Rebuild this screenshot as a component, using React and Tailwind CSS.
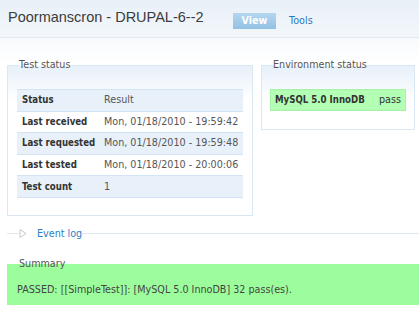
import React from 'react';

const rows = [
  { label: 'Status', value: 'Result', shade: true },
  { label: 'Last received', value: 'Mon, 01/18/2010 - 19:59:42', shade: false },
  { label: 'Last requested', value: 'Mon, 01/18/2010 - 19:59:48', shade: true },
  { label: 'Last tested', value: 'Mon, 01/18/2010 - 20:00:06', shade: false },
  { label: 'Test count', value: '1', shade: true },
];

const App = () => {
  return (
    <div className="w-[419px] h-[316px] overflow-hidden bg-white text-[#4a4a4a] text-[9.6px] leading-[12px] font-['DejaVu_Sans',sans-serif]">
      <div className="h-[38px] border-b border-[#e1e9f1] bg-gradient-to-b from-[#e8f0f8] to-[#f3f7fb] flex items-start">
        <h1 className="ml-[8px] mt-[9px] w-[225px] text-[14.5px] leading-[17px] text-[#3c3c3c] font-['Liberation_Sans',sans-serif]">
          Poormanscron - DRUPAL-6--2
        </h1>
        <div className="mt-[13px] flex items-center">
          <span className="w-[43px] h-[16px] flex items-center justify-center bg-gradient-to-b from-[#b6d6ef] to-[#92c1e4] text-white font-bold">
            View
          </span>
          <span className="ml-[13px] text-[#2a78bf]">Tools</span>
        </div>
      </div>

      <div className="bg-gradient-to-b from-[#f7fafd] to-white to-[25px] pt-[21px] px-[7px] w-[440px]">
        <div className="flex items-start gap-[8px]">
          <fieldset className="w-[246px] border border-[#d9e7f4] bg-gradient-to-b from-[#e7f0f9] to-white to-[35px] px-[9px] pt-[18px] pb-[17px]">
            <legend className="ml-[2px] text-[#555]">Test status</legend>
            <div className="border-t border-[#d2e4f4]">
              {rows.map((r) => (
                <div
                  key={r.label}
                  className={`flex items-center h-[21.6px] border-b border-[#d2e4f4] ${r.shade ? 'bg-[#e8f1f9]' : 'bg-white'}`}
                >
                  <span className="w-[82px] pl-[5px] font-bold text-[#333] whitespace-nowrap font-['DejaVu_Sans_Condensed',sans-serif]">{r.label}</span>
                  <span className="pl-[5px] text-[#555] whitespace-nowrap">{r.value}</span>
                </div>
              ))}
            </div>
          </fieldset>

          <fieldset className="w-[154px] border border-[#d9e7f4] bg-gradient-to-b from-[#e7f0f9] to-white to-[35px] px-[8px] pt-[18px] pb-[18px]">
            <legend className="ml-[3px] text-[#555]">Environment status</legend>
            <div className="h-[22px] flex items-center bg-[#b3ffb3] border border-[#a6f2a6] px-[4px]">
              <span className="font-bold text-[#333] w-[104px] whitespace-nowrap font-['DejaVu_Sans_Condensed',sans-serif]">MySQL 5.0 InnoDB</span>
              <span className="text-[#333]">pass</span>
            </div>
          </fieldset>
        </div>

        <fieldset className="mt-[12px] border-t border-[#dde8f2] px-[9px]">
          <legend className="ml-[3px] flex items-center">
            <svg width="8" height="9" viewBox="0 0 8 9" className="mr-[10px]">
              <path d="M1 0.5 L7 4.5 L1 8.5 Z" fill="white" stroke="#c8c8c8" strokeWidth="1" />
            </svg>
            <span className="text-[#2a7fcb]">Event log</span>
          </legend>
        </fieldset>

        <fieldset className="mt-[18px] w-[420px] bg-[#9cfd9c] px-[10px] pt-[14px] pb-[9px]">
          <legend className="ml-[2px] text-[#555]">Summary</legend>
          <p className="text-[#444] whitespace-nowrap">PASSED: [[SimpleTest]]: [MySQL 5.0 InnoDB] 32 pass(es).</p>
        </fieldset>
      </div>
    </div>
  );
};

export default App;
